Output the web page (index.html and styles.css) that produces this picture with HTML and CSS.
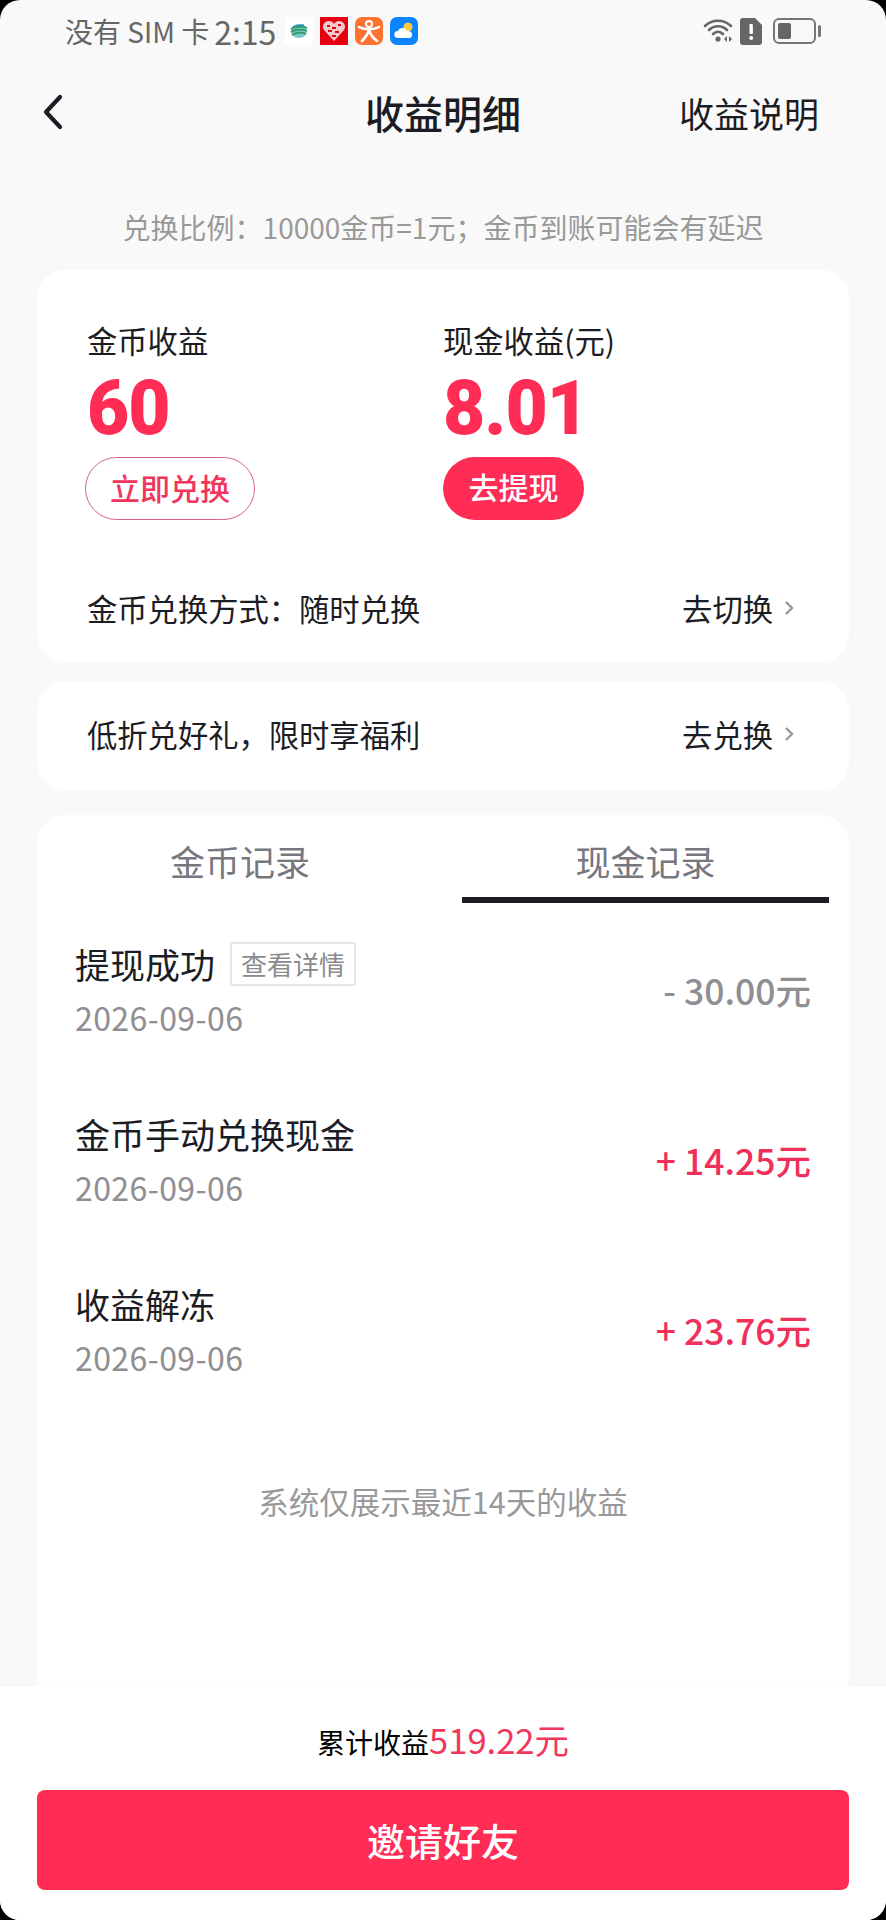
FILE: index.html
```html
<!DOCTYPE html>
<html lang="zh-CN">
<head>
  <meta charset="UTF-8">
  <meta name="viewport" content="width=device-width, initial-scale=1.0">
  <title>收益明细</title>
  <link rel="stylesheet" href="styles.css">
</head>
<body>
  <div class="screen">
    <!-- status bar -->
    <div class="status-bar">
      <div class="status-left">
        <span class="carrier">没有 SIM 卡</span>
        <span class="clock">2:15</span>
        <svg class="app-icon" viewBox="0 0 28 28">
          <rect width="28" height="28" fill="#fff"/>
          <ellipse cx="14" cy="14" rx="8" ry="7" fill="#7cc4c8"/>
          <path d="M6 12 C10 9 18 9 22 11 M6 15 C10 12 18 12 22 14 M7 18 C11 15 18 15 21 17" stroke="#2e9a5c" stroke-width="1.6" fill="none"/>
          <path d="M8 10 C12 8 16 8 19 8" stroke="#2a8fc4" stroke-width="1.6" fill="none"/>
        </svg>
        <svg class="app-icon" viewBox="0 0 28 28">
          <rect width="28" height="28" fill="#e60012"/>
          <path d="M14 24 L4 13 C1 8 5 4 9 4 C11 4 13 5 14 7 C15 5 17 4 19 4 C23 4 27 8 24 13 Z" fill="#f7c9cc"/>
          <path d="M7 9h3M12 11h4M18 8h3M8 14h4M15 15h4M12 19h4" stroke="#e60012" stroke-width="2"/>
        </svg>
        <svg class="app-icon" viewBox="0 0 28 28">
          <rect width="28" height="28" rx="7" fill="#ff7332"/>
          <circle cx="14" cy="7" r="3" fill="none" stroke="#fff" stroke-width="2"/>
          <path d="M4 10 C9 13 19 13 24 10 M14 12 C13 18 10 21 7 24 M14 12 C15 18 18 21 22 24" fill="none" stroke="#fff" stroke-width="2.6" stroke-linecap="round"/>
        </svg>
        <svg class="app-icon" viewBox="0 0 28 28">
          <rect width="28" height="28" rx="7" fill="#0a84ff"/>
          <circle cx="18" cy="10" r="4.5" fill="#ffc93c"/>
          <path d="M8 21 C3 21 3 14 8 14 C9 10 16 10 17 14 C23 13 24 21 19 21 Z" fill="#fff"/>
        </svg>
      </div>
      <div class="status-right">
        <svg class="wifi-icon" viewBox="0 0 32 26">
          <path d="M2 8 C9 1 21 1 28 8 M6 12 C11 7 19 7 24 12 M10 16 C13 13 17 13 20 16" fill="none" stroke="#666" stroke-width="2.6" stroke-linecap="round"/>
          <circle cx="15" cy="21" r="2.6" fill="#666"/>
          <path d="M24 18v6l-3-3zM26 18v6l3-3z" fill="#666"/>
        </svg>
        <svg class="sim-icon" viewBox="0 0 22 27">
          <path d="M3 0 H15 L22 7 V24 Q22 27 19 27 H3 Q0 27 0 24 V3 Q0 0 3 0 Z" fill="#666"/>
          <rect x="9.5" y="6" width="3.4" height="10" rx="1" fill="#fff"/>
          <circle cx="11.2" cy="20" r="2" fill="#fff"/>
        </svg>
        <div class="battery">
          <div class="battery-body"><div class="battery-level"></div></div>
          <div class="battery-nub"></div>
        </div>
      </div>
    </div>

    <!-- nav -->
    <div class="nav">
      <svg class="back-icon" viewBox="0 0 20 36">
        <path d="M17 3 L3 18 L17 33" fill="none" stroke="#1c1c24" stroke-width="4.2" stroke-linecap="round" stroke-linejoin="round"/>
      </svg>
      <div class="nav-title">收益明细</div>
      <div class="nav-link">收益说明</div>
    </div>

    <div class="hint">兑换比例&#xFF1A;10000金币=1元&#xFF1B;金币到账可能会有延迟</div>

    <!-- balance card -->
    <div class="card balance-card">
      <div class="balance-cols">
        <div class="balance-col">
          <div class="balance-label">金币收益</div>
          <div class="balance-num"><span class="num-text">60</span></div>
          <div class="pill pill-outline">立即兑换</div>
        </div>
        <div class="balance-col">
          <div class="balance-label">现金收益(元)</div>
          <div class="balance-num"><span class="num-text">8.01</span></div>
          <div class="pill pill-solid">去提现</div>
        </div>
      </div>
      <div class="link-row balance-row">
        <span>金币兑换方式&#xFF1A;随时兑换</span>
        <span class="link-action">去切换
          <svg class="chevron" viewBox="0 0 10 16"><path d="M2 2 L8 8 L2 14" fill="none" stroke="#999" stroke-width="2.4"/></svg>
        </span>
      </div>
    </div>

    <div class="card gift-card">
      <div class="link-row">
        <span>低折兑好礼&#xFF0C;限时享福利</span>
        <span class="link-action">去兑换
          <svg class="chevron" viewBox="0 0 10 16"><path d="M2 2 L8 8 L2 14" fill="none" stroke="#999" stroke-width="2.4"/></svg>
        </span>
      </div>
    </div>

    <!-- records -->
    <div class="card records-card">
      <div class="tabs">
        <div class="tab">金币记录</div>
        <div class="tab tab-active">现金记录</div>
      </div>
      <div class="record">
        <div>
          <div class="record-title">提现成功<span class="detail-tag">查看详情</span></div>
          <div class="record-date">2026-09-06</div>
        </div>
        <div class="record-amount amount-out">- 30.00元</div>
      </div>
      <div class="record">
        <div>
          <div class="record-title">金币手动兑换现金</div>
          <div class="record-date">2026-09-06</div>
        </div>
        <div class="record-amount">+ 14.25元</div>
      </div>
      <div class="record">
        <div>
          <div class="record-title">收益解冻</div>
          <div class="record-date">2026-09-06</div>
        </div>
        <div class="record-amount">+ 23.76元</div>
      </div>
      <div class="records-note">系统仅展示最近14天的收益</div>
    </div>

    <!-- footer -->
    <div class="footer">
      <div class="total">累计收益<span class="total-num">519.22元</span></div>
      <div class="invite-btn">邀请好友</div>
    </div>
  </div>
</body>
</html>
```

FILE: styles.css
```css
* {
  box-sizing: border-box;
}

body {
  margin: 0;
  background: #000;
  font-family: "Noto Sans CJK SC", "Noto Sans", sans-serif;
  color: #1c1c24;
}

.screen {
  width: 886px;
  height: 1920px;
  display: flex;
  flex-direction: column;
  background: #f9f9f9;
  border-radius: 20px;
  overflow: hidden;
}

.status-bar {
  height: 60px;
  flex: none;
  padding: 2px 65px 0 65px;
  display: flex;
  justify-content: space-between;
  align-items: center;
  color: #666;
}

.status-left,
.status-right {
  display: flex;
  align-items: center;
}

.carrier {
  font-size: 28px;
  line-height: 36px;
  margin-right: 5px;
}

.clock {
  font-size: 32px;
  line-height: 36px;
  margin-right: 9px;
}

.app-icon {
  width: 28px;
  height: 28px;
  margin-right: 7px;
}

.wifi-icon {
  width: 32px;
  height: 26px;
}

.sim-icon {
  width: 22px;
  height: 27px;
  margin-left: 5px;
}

.battery {
  display: flex;
  align-items: center;
  margin-left: 11px;
}

.battery-body {
  width: 43px;
  height: 26px;
  border: 2px solid #777;
  border-radius: 6px;
  padding: 3px;
}

.battery-level {
  width: 13px;
  height: 100%;
  background: #666;
  border-radius: 2px;
}

.battery-nub {
  width: 3px;
  height: 12px;
  margin-left: 2px;
  background: #777;
  border-radius: 2px;
}

.nav {
  height: 104px;
  flex: none;
  position: relative;
  display: flex;
  align-items: center;
  justify-content: space-between;
  padding: 0 67px 0 43px;
}

.back-icon {
  width: 20px;
  height: 36px;
}

.nav-title {
  position: absolute;
  left: 0;
  right: 0;
  text-align: center;
  font-size: 39px;
  font-weight: 500;
}

.nav-link {
  font-size: 35px;
}

.hint {
  margin-top: 44px;
  height: 38px;
  line-height: 38px;
  text-align: center;
  font-size: 28px;
  color: #999;
}

.card {
  flex: none;
  width: 812px;
  margin-left: 37px;
  background: #fff;
  border-radius: 28px;
}

.balance-card {
  margin-top: 24px;
  height: 392px;
  padding: 50px 50px 0;
}

.balance-cols {
  display: flex;
}

.balance-col {
  width: 358px;
}

.balance-label {
  font-size: 30.3px;
  line-height: 40px;
}

/* no DIN here, so Roboto black squeezed to about the same width */
.balance-num {
  height: 88px;
  margin-top: 4px;
  font-family: "Roboto", sans-serif;
  font-weight: 900;
  font-size: 76px;
  letter-spacing: -1px;
  line-height: 88px;
  color: #ff2d55;
}

.num-text {
  display: inline-block;
  transform: scaleX(0.96);
  transform-origin: left center;
}

.pill {
  display: inline-block;
  height: 63px;
  line-height: 59px;
  margin-top: 5px;
  border-radius: 32px;
  font-size: 30px;
  font-weight: 500;
  text-align: center;
}

.pill-outline {
  width: 170px;
  margin-left: -2px;
  border: 1px solid #d9657f;
  color: #f0365c;
}

.pill-solid {
  width: 141px;
  background: #ff2d55;
  color: #fff;
}

.link-row {
  display: flex;
  justify-content: space-between;
  align-items: center;
  font-size: 30.3px;
}

.balance-row {
  margin-top: 66px;
}

.link-action {
  display: flex;
  align-items: center;
  margin-right: 5px;
}

.chevron {
  width: 10px;
  height: 16px;
  margin-left: 11px;
}

.gift-card {
  margin-top: 20px;
  height: 108px;
  padding: 30px 50px 0;
}

.records-card {
  flex: 1;
  margin-top: 25px;
  border-radius: 28px 28px 0 0;
}

.tabs {
  display: flex;
  height: 88px;
  padding: 0 20px 0 0;
}

.tab {
  width: 406px;
  text-align: center;
  font-size: 35px;
  line-height: 92px;
  color: #77777f;
}

.tab-active {
  width: 367px;
  margin-left: 19px;
  border-bottom: 6px solid #1c1c24;
}

.record {
  height: 170px;
  display: flex;
  justify-content: space-between;
  align-items: center;
  padding: 2px 38px 0;
}

.record-title {
  display: flex;
  align-items: center;
  font-size: 35px;
  line-height: 44px;
}

.detail-tag {
  margin-left: 15px;
  padding: 0 9px;
  height: 44px;
  line-height: 40px;
  border: 2px solid #e6e6e6;
  border-radius: 3px;
  font-size: 26px;
  color: #8a8a8f;
}

.record-date {
  margin-top: 11px;
  font-size: 32px;
  letter-spacing: 0.4px;
  line-height: 40px;
  color: #8e8e93;
}

.record-amount {
  font-size: 35.5px;
  font-weight: 500;
  color: #f0305a;
}

.amount-out {
  color: #8e8e93;
}

.records-note {
  margin-top: 66px;
  text-align: center;
  font-size: 30.5px;
  color: #999;
}

.footer {
  flex: none;
  height: 234px;
  padding: 31px 37px 0;
  background: #fff;
  box-shadow: 0 -2px 4px rgba(0, 0, 0, 0.02);
  position: relative;
}

.total {
  text-align: center;
  font-size: 28px;
  line-height: 44px;
  color: #000;
}

.total-num {
  font-size: 34.5px;
  color: #f0365c;
}

.invite-btn {
  margin-top: 26px;
  height: 100px;
  line-height: 99px;
  background: #ff2d55;
  border-radius: 8px;
  text-align: center;
  font-size: 38px;
  font-weight: 500;
  color: #fff;
}
```
